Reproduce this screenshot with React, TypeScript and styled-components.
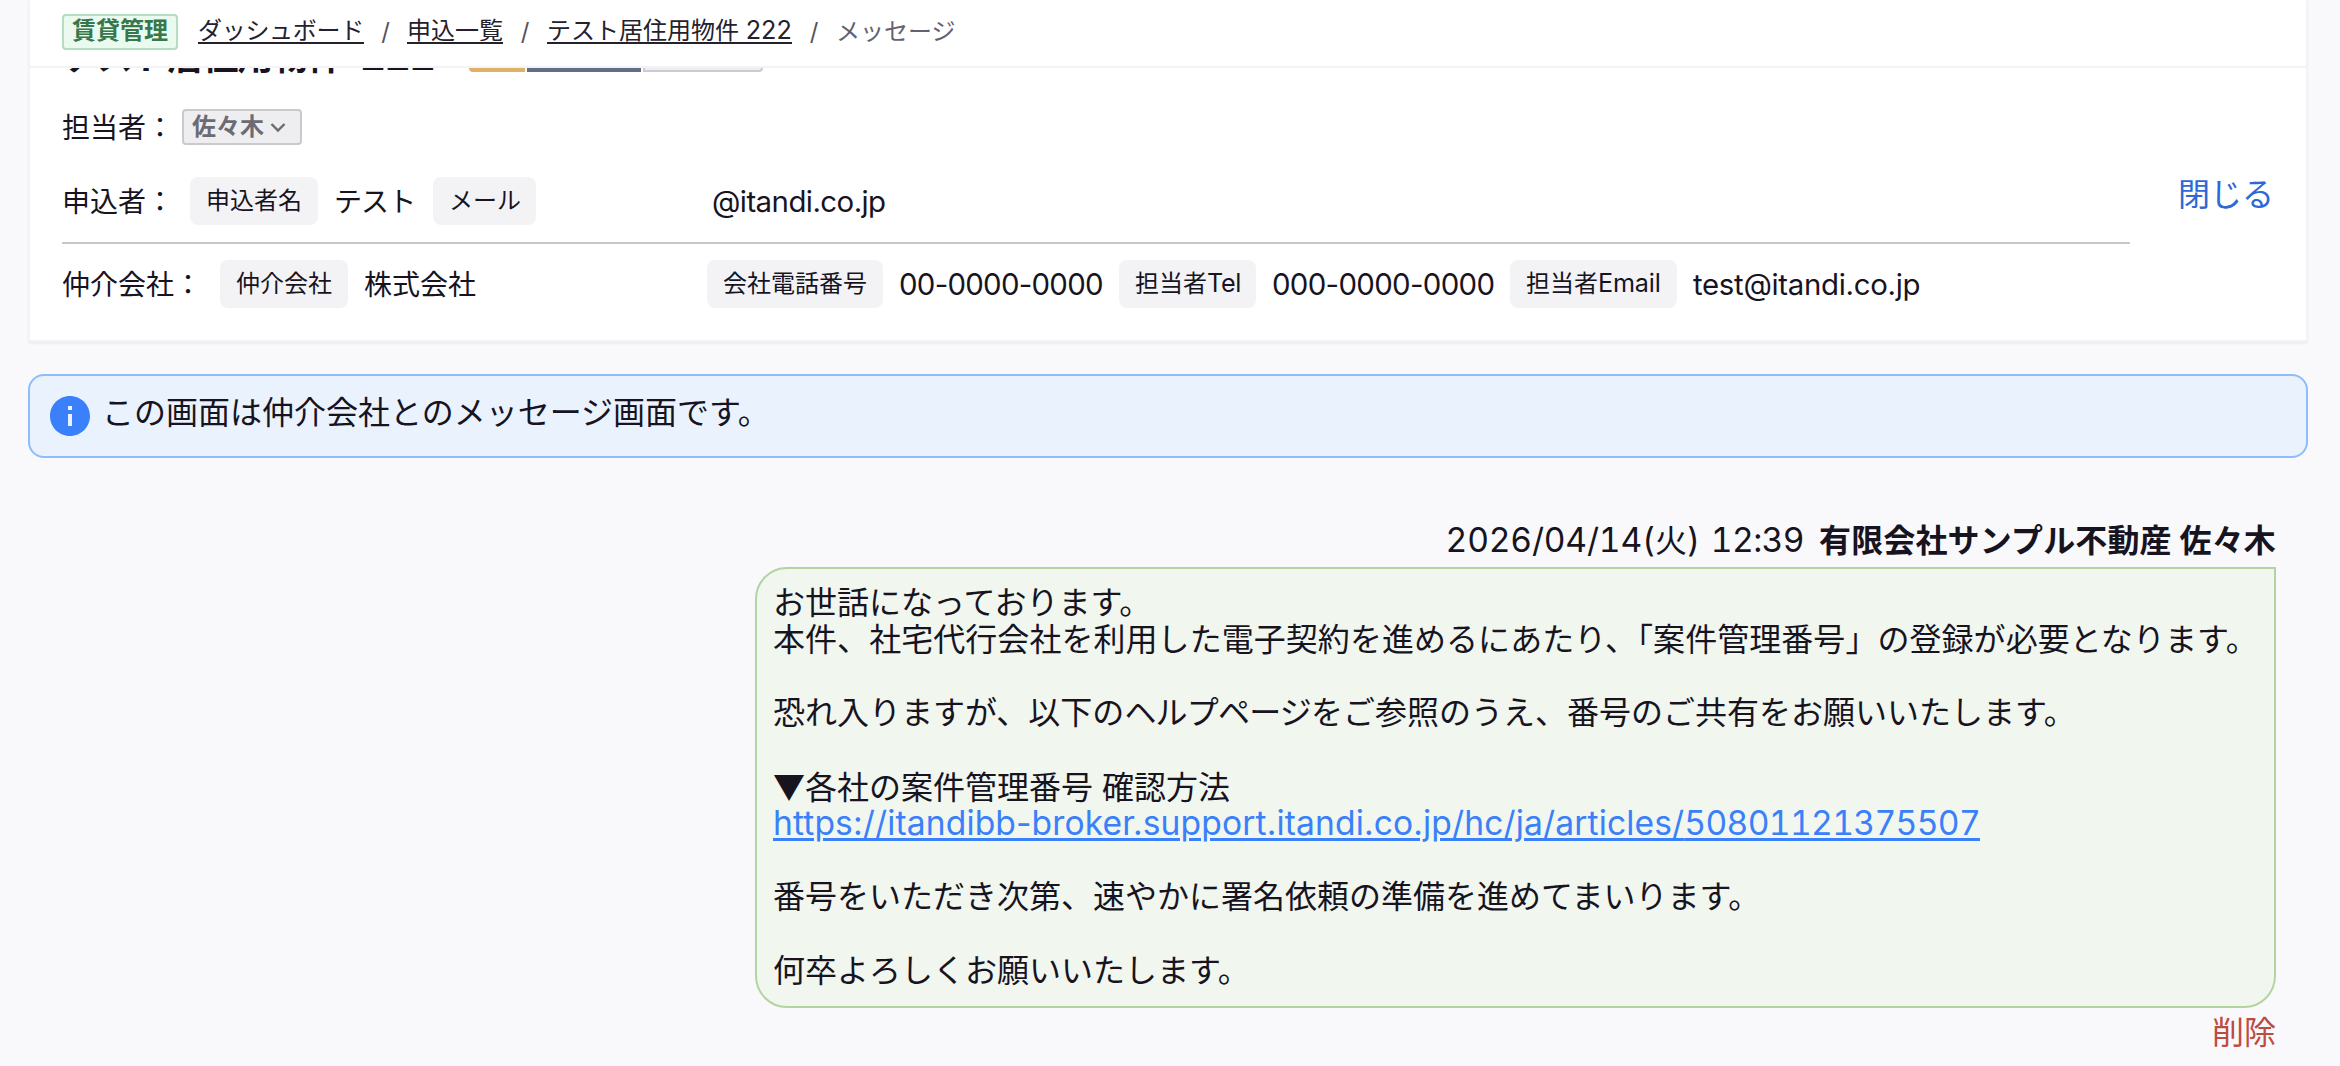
import React from 'react';
import styled, { createGlobalStyle } from 'styled-components';

const Global = createGlobalStyle`
  *, *::before, *::after { box-sizing: border-box; }
  body {
    margin: 0;
    height: 1066px;
    overflow: hidden;
    background: #f9f9fc;
    color: #17141f;
    font-family: Inter, "Noto Sans CJK JP", sans-serif;
    font-size: 28px;
    line-height: 1.15;
    white-space: nowrap;
  }
`;

const Page = styled.main`
  padding: 0 32px 0 28px;
  display: flex;
  flex-direction: column;
`;

const Latin = styled.span<{ $track?: number; $scale?: number; $tabular?: boolean; $space?: number }>`
  font-size: ${p => p.$scale ?? 1.05}em;
  font-variant-numeric: ${p => (p.$tabular ? 'tabular-nums' : 'normal')};
  line-height: 1;
  letter-spacing: ${p => p.$track ?? 0}px;
  word-spacing: ${p => p.$space ?? 0}px;
`;

const Card = styled.section`
  display: flex;
  flex-direction: column;
  height: 342px;
  border: 2px solid #f3f3f5;
  border-top: 0;
  background: #fff;
  box-shadow: 0 2px 2px rgba(20, 20, 40, 0.05);
`;

const Nav = styled.nav`
  display: flex;
  align-items: center;
  flex: none;
  height: 68px;
  padding: 0 32px 2px;
  border-bottom: 2px solid #f3f3f5;
  font-size: 24px;
`;

const Tag = styled.span`
  height: 36px;
  margin-right: 20px;
  padding: 0 8px;
  border: 2px solid #b4dfbf;
  border-radius: 4px;
  background: #eafaef;
  color: #36774b;
  font-weight: 700;
  line-height: 30px;
`;

const Crumb = styled.a<{ $width: number; $track?: number }>`
  width: ${p => p.$width}px;
  height: 30px;
  margin-top: -6px;
  border-bottom: 2px solid #24212c;
  color: #24212c;
  line-height: 34px;
  letter-spacing: ${p => p.$track ?? 0}px;
`;

const Slash = styled.span<{ $width?: number }>`
  width: ${p => p.$width ?? 44}px;
  text-align: center;
  color: #55535d;
  line-height: 30px;
`;

const Current = styled.span`
  color: #64626c;
  line-height: 30px;
`;

const TitleRow = styled.div`
  display: flex;
  align-items: flex-end;
  flex: none;
  height: 6px;
  overflow: hidden;
  padding-left: 32px;
`;

const Title = styled.h1`
  width: 407px;
  margin: 0 0 -3px;
  font-size: 36px;
  font-weight: 700;
  line-height: 36px;
  letter-spacing: -0.9px;
  word-spacing: 10px;
`;

const Step = styled.span<{ $width: number; $bg: string; $edge?: string; $radius?: string }>`
  width: ${p => p.$width}px;
  height: 36px;
  margin: 0 2px 2px 0;
  background: ${p => p.$bg};
  border: 2px solid ${p => p.$edge ?? p.$bg};
  border-radius: ${p => p.$radius ?? '0'};
`;

const Body = styled.div`
  display: flex;
  align-items: flex-start;
  justify-content: space-between;
  padding: 20px 32px 0;
`;

const Details = styled.div`
  width: 2068px;
  display: flex;
  flex-direction: column;
`;

const Line = styled.div<{ $height: number; $divided?: boolean }>`
  display: flex;
  align-items: center;
  height: ${p => p.$height}px;
  border-bottom: ${p => (p.$divided ? '2px solid #c8c8c8' : '0')};
`;

const Label = styled.span<{ $width: number }>`
  width: ${p => p.$width}px;
  padding-top: 2px;
`;

const Select = styled.button`
  display: flex;
  align-items: center;
  gap: 4px;
  width: 120px;
  height: 36px;
  padding: 0 8px;
  border: 2px solid #cacace;
  border-radius: 4px;
  background: #eeeef1;
  color: #6c6b74;
  font: 700 24px/30px Inter, "Noto Sans CJK JP", sans-serif;
`;

const Chip = styled.span<{ $width: number }>`
  width: ${p => p.$width}px;
  height: 48px;
  padding-left: 16px;
  border-radius: 8px;
  background: #f3f3f6;
  font-size: 24px;
  line-height: 47px;
`;

const Value = styled.span<{ $width?: number; $indent?: number; $track?: number }>`
  width: ${p => (p.$width ? `${p.$width}px` : 'auto')};
  padding: 2px 0 0 ${p => p.$indent ?? 0}px;
  margin: 0 16px;
  letter-spacing: ${p => p.$track ?? 0}px;
`;

const Close = styled.button`
  margin-top: 81px;
  padding: 0;
  border: 0;
  background: none;
  color: #2c68d8;
  font: 400 32px/40px Inter, "Noto Sans CJK JP", sans-serif;
`;

const Notice = styled.section`
  display: flex;
  align-items: center;
  gap: 8px;
  height: 84px;
  margin-top: 32px;
  padding: 0 16px;
  border: 2px solid #8dbdfc;
  border-radius: 16px;
  background: #eaf2fe;
  font-size: 32px;
  svg { flex: none; fill: #3a80fa; }
  p { margin: 0 0 6px; }
`;

const Thread = styled.section`
  display: flex;
  flex-direction: column;
  align-items: flex-end;
  padding: 63px 32px 0 0;
  font-size: 32px;
`;

const Meta = styled.header`
  display: flex;
  align-items: center;
  gap: 15px;
  height: 40px;
  margin-bottom: 6px;
  strong { font-weight: 700; letter-spacing: 0.16px; }
`;

const Bubble = styled.div`
  width: 1521px;
  padding: 16px;
  border: 2px solid #b1d4a1;
  border-radius: 32px 0 32px 32px;
  background: #f1f6ef;
`;

const Text = styled.p<{ $track?: number }>`
  height: 36.8px;
  margin: 0;
  line-height: 36.8px;
  letter-spacing: ${p => p.$track ?? 0}px;
`;

const Tight = styled.span`
  letter-spacing: -0.8px;
`;

const Mark = styled.span`
  font-family: "Noto Sans CJK JP", sans-serif;
  line-height: 1;
`;

const Link = styled.a`
  color: #3a80fa;
  text-decoration: underline;
  text-decoration-thickness: 3px;
  text-underline-offset: 3px;
`;

const Remove = styled.button`
  margin-top: 5px;
  padding: 0;
  border: 0;
  background: none;
  color: #be4a40;
  font: 400 32px/40px Inter, "Noto Sans CJK JP", sans-serif;
`;

export default function App() {
  return (
    <>
      <Global />
      <Page>
        <Card>
          <Nav>
            <Tag>賃貸管理</Tag>
            <Crumb $width={166} $track={-0.3}>ダッシュボード</Crumb>
            <Slash $width={43}>/</Slash>
            <Crumb $width={96}>申込一覧</Crumb>
            <Slash>/</Slash>
            <Crumb $width={245}>テスト居住用物件 <Latin>222</Latin></Crumb>
            <Slash>/</Slash>
            <Current>メッセージ</Current>
          </Nav>
          <TitleRow>
            <Title>テスト居住用物件 <Latin $scale={1.1}>222</Latin></Title>
            <Step $width={56} $bg="#deb068" $radius="4px 0 0 4px" />
            <Step $width={114} $bg="#646c88" />
            <Step $width={120} $bg="#eeeef1" $edge="#cbcbd1" $radius="0 4px 4px 0" />
          </TitleRow>
          <Body>
            <Details>
              <Line $height={66}>
                <Label $width={120}>担当者：</Label>
                <Select>
                  佐々木
                  <svg width="20" height="20" viewBox="0 0 20 20" fill="none" stroke="currentColor" strokeWidth="2.4">
                    <path d="M3.5 7l6.5 6.5L16.5 7" />
                  </svg>
                </Select>
              </Line>
              <Line $height={84} $divided>
                <Label $width={128}>申込者：</Label>
                <Chip $width={128}>申込者名</Chip>
                <Value $width={83} $track={-0.9}>テスト</Value>
                <Chip $width={103}>メール</Chip>
                <Value $indent={160}><Latin $track={-0.55}>@itandi.co.jp</Latin></Value>
              </Line>
              <Line $height={80}>
                <Label $width={158}>仲介会社：</Label>
                <Chip $width={128}>仲介会社</Chip>
                <Value $width={327}>株式会社</Value>
                <Chip $width={176}>会社電話番号</Chip>
                <Value $width={204}><Latin $track={-0.72}>00-0000-0000</Latin></Value>
                <Chip $width={137}>担当者<Latin $track={-0.4}>Tel</Latin></Chip>
                <Value $width={222}><Latin $track={-0.67}>000-0000-0000</Latin></Value>
                <Chip $width={167}>担当者<Latin $track={-0.2}>Email</Latin></Chip>
                <Value><Latin $track={-0.3}>test@itandi.co.jp</Latin></Value>
              </Line>
            </Details>
            <Close>閉じる</Close>
          </Body>
        </Card>
        <Notice>
          <svg width="48" height="48" viewBox="0 0 24 24">
            <path d="M12 2C6.48 2 2 6.48 2 12s4.48 10 10 10 10-4.48 10-10S17.52 2 12 2zm1 15h-2v-6h2v6zm0-8h-2V7h2v2z" />
          </svg>
          <p>この画面は仲介会社とのメッセージ画面です。</p>
        </Notice>
        <Thread>
          <Meta>
            <span>
              <Latin $tabular $track={-0.2}>2026/04/14(</Latin>火
              <Latin $tabular $track={-0.6} $space={3}>) 12:39</Latin>
            </span>
            <strong>有限会社サンプル不動産 佐々木</strong>
          </Meta>
          <Bubble>
            <Text>お世話になっております。</Text>
            <Text $track={0.05}>本件、社宅代行会社を利用した電子契約を進めるにあたり、「案件管理番号」の登録が必要となります。</Text>
            <Text />
            <Text>恐れ入りますが、以下の<Tight>ヘルプページ</Tight>をご参照のうえ、番号のご共有をお願いいたします。</Text>
            <Text />
            <Text><Mark>▼</Mark>各社の案件管理番号 確認方法</Text>
            <Text>
              <Link>
                <Latin $track={0.13}>https://itandibb-broker.support.itandi.co.jp/hc/ja/articles/</Latin>
                <Latin $tabular $track={-0.65}>50801121375507</Latin>
              </Link>
            </Text>
            <Text />
            <Text>番号をいただき次第、速やかに署名依頼の準備を進めてまいります。</Text>
            <Text />
            <Text>何卒よろしくお願いいたします。</Text>
          </Bubble>
          <Remove>削除</Remove>
        </Thread>
      </Page>
    </>
  );
}
